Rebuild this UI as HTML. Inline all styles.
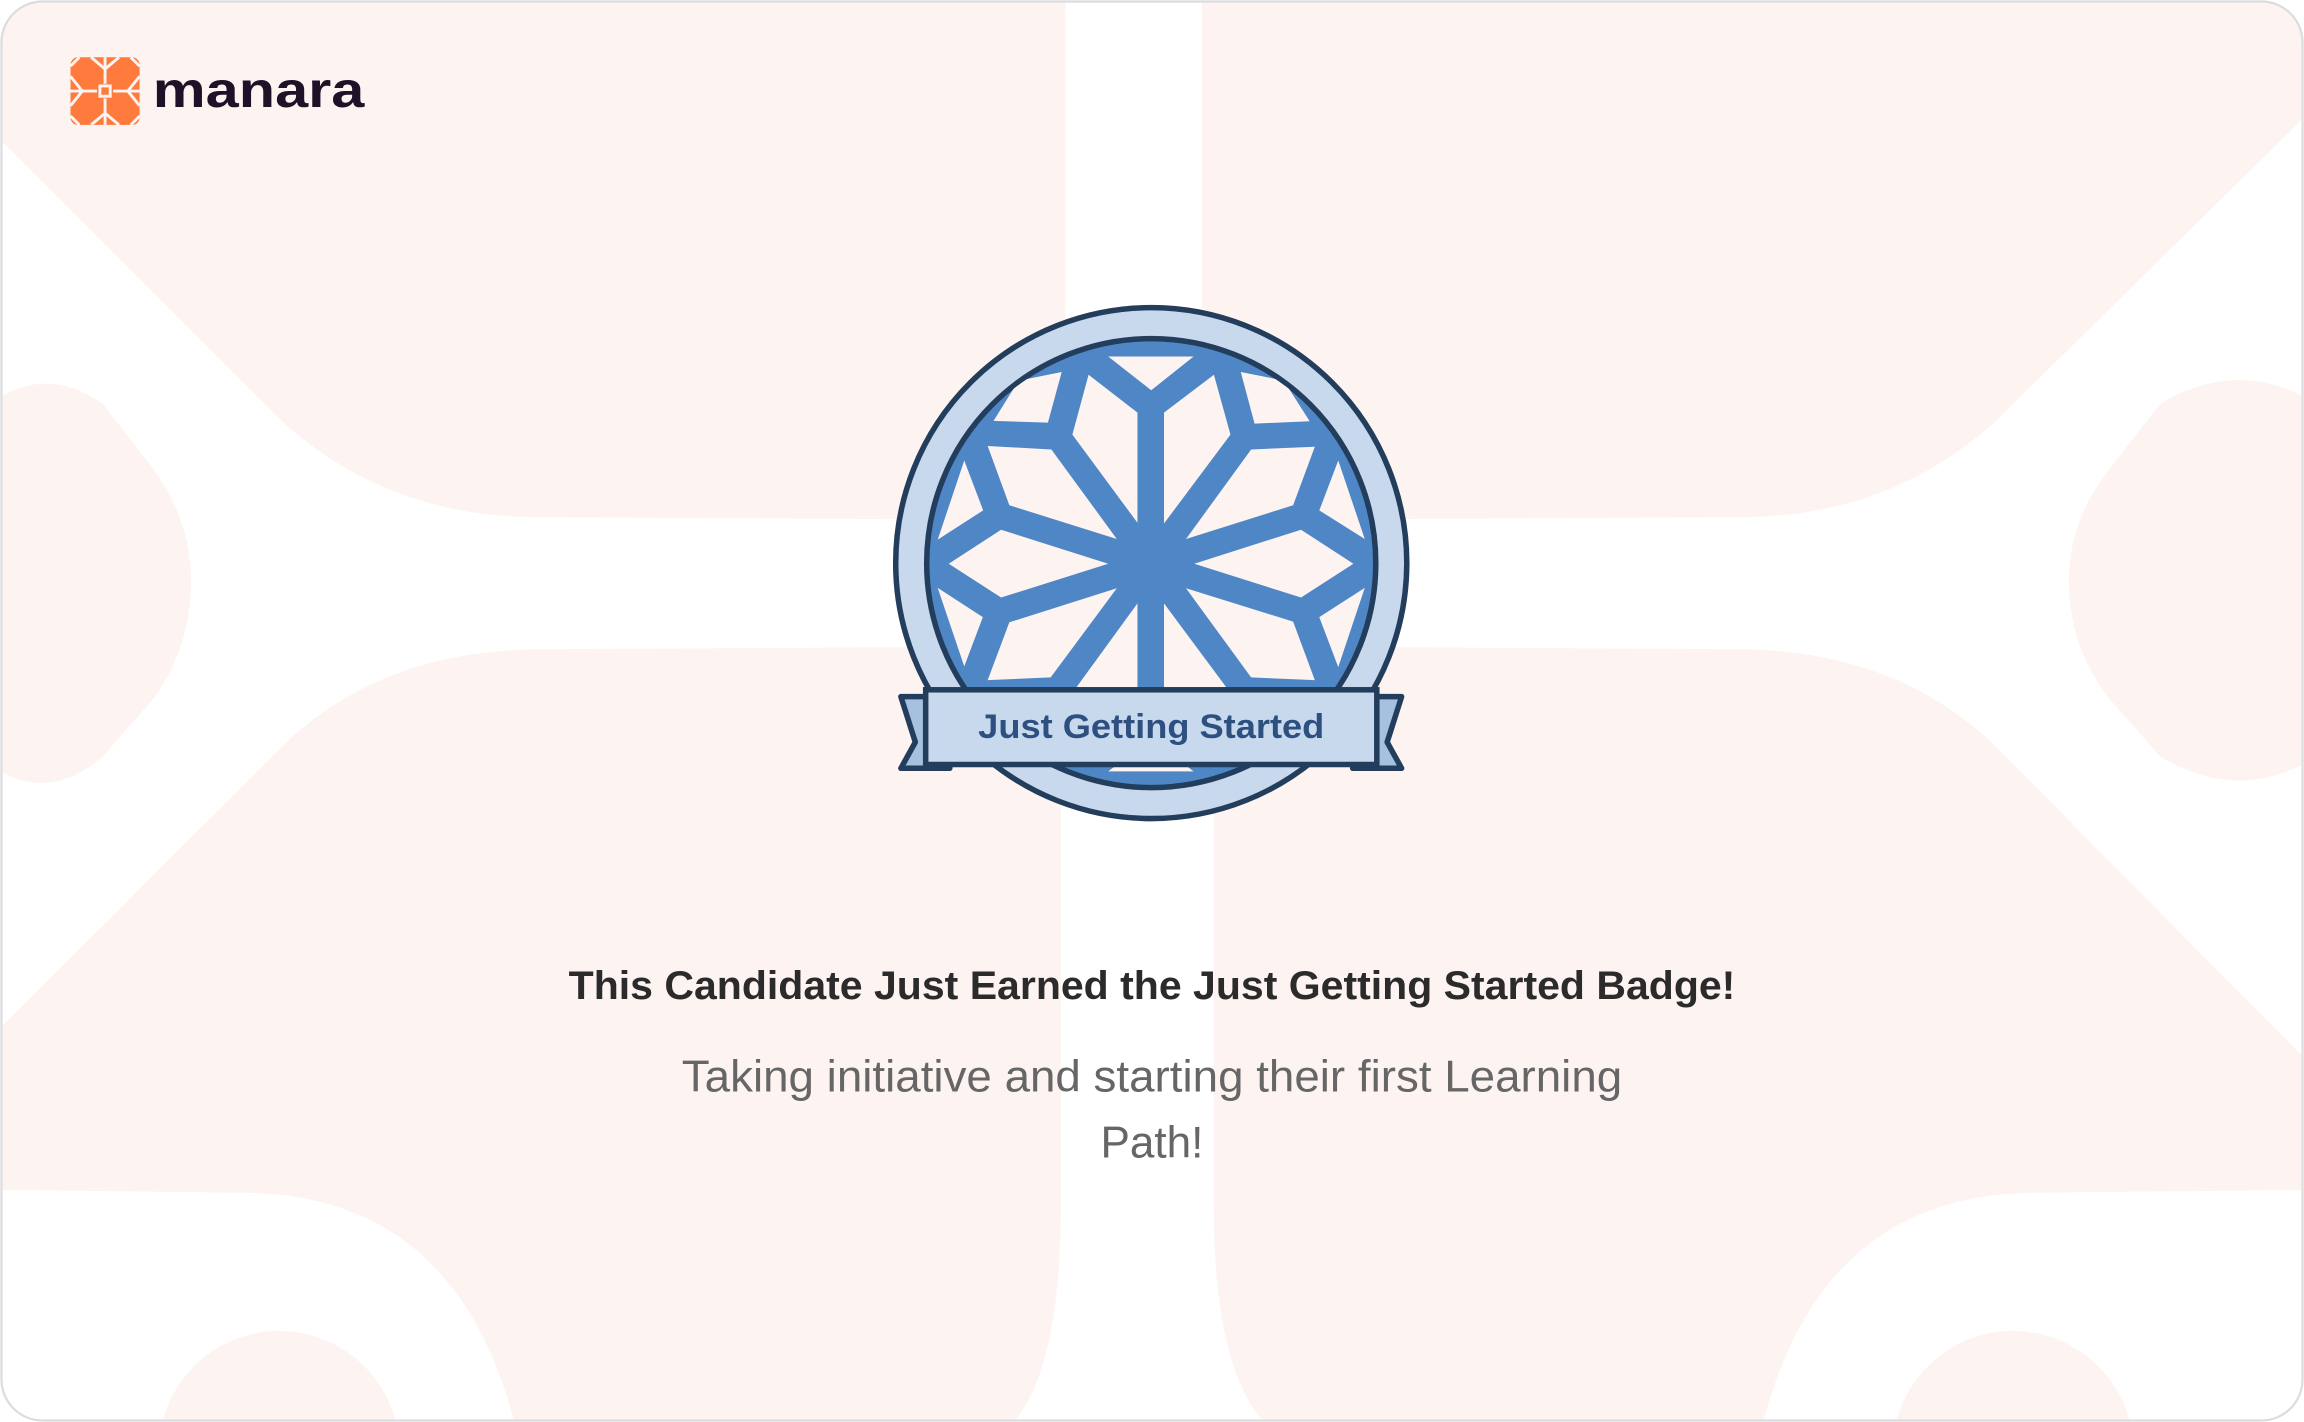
<!DOCTYPE html>
<html><head><meta charset="utf-8"><style>
html,body{margin:0;padding:0;background:#fff;width:2304px;height:1422px;overflow:hidden;}
svg{display:block;}
</style></head><body>
<svg width="2304" height="1422" viewBox="0 0 1568 968" preserveAspectRatio="none" xmlns="http://www.w3.org/2000/svg">
<defs><clipPath id="card"><rect x="1" y="1" width="1566" height="966" rx="28"/></clipPath></defs>
<rect x="0" y="0" width="1568" height="968" fill="#fff"/>
<g clip-path="url(#card)" fill="#fdf4f1">
<path d="M0,0 H725 V340 Q725,354 710,354 L360,352 Q260,350 190,285 L0,95 Z"/>
<path d="M818,0 H1568 V80 L1360,285 Q1290,350 1190,352 L830,354 Q818,354 818,340 Z"/>
<path d="M0,700 L190,510 Q255,445 360,442 L710,440 Q722,440 722,455 V820 Q722,930 690,968 H350 Q310,815 170,812 L0,810 Z"/>
<path d="M1568,720 L1360,510 Q1295,445 1190,442 L840,440 Q826,440 826,455 V820 Q826,930 860,968 H1200 Q1240,815 1380,812 L1568,810 Z"/>
<circle cx="190" cy="988" r="82"/>
<circle cx="1370" cy="988" r="82"/>
<path d="M0,270 Q35,250 70,275 L105,320 Q130,355 130,395 Q130,440 105,475 L70,515 Q35,545 0,525 Z"/>
<path d="M1568,270 Q1520,245 1470,275 L1435,320 Q1408,355 1408,395 Q1408,440 1435,475 L1470,515 Q1520,545 1568,520 Z"/>
</g>
<rect x="1" y="1" width="1566" height="966" rx="28" fill="none" stroke="#dcdcdf" stroke-width="1.5"/>

<!-- logo -->
<rect x="48" y="39" width="47" height="46" rx="5" fill="#ff7a3d"/>
<g stroke="#fdf4f1" stroke-width="2" fill="none">
<path d="M71.5,39 V57 M71.5,67 V85 M48,62 H66 M77,62 H95"/>
<path d="M62,39 L71.5,47 L81,39 M62,85 L71.5,77 L81,85 M48,52 L56,62 L48,72 M95,52 L87,62 L95,72"/>
<path d="M48,45 L54,39 M89,39 L95,45 M48,79 L54,85 M89,85 L95,79"/>
<rect x="68" y="58.5" width="7" height="7"/>
</g>
<text x="104" y="73" font-family="Liberation Sans, sans-serif" font-weight="bold" font-size="34" fill="#1e1128" textLength="144" lengthAdjust="spacingAndGlyphs">manara</text>

<!-- badge -->
<svg x="599.5" y="200.5" width="367.5" height="374.3" viewBox="0 0 1568 1597">
<defs><clipPath id="inner"><circle cx="785" cy="780" r="645"/></clipPath></defs>
<circle cx="785" cy="780" r="742" fill="#c8d9ee" stroke="#233d5c" stroke-width="16"/>
<circle cx="785" cy="780" r="652" fill="#4f87c6" stroke="#233d5c" stroke-width="16"/>
<g clip-path="url(#inner)" fill="#fdf4f1">
<polygon points="660,180 908,180 785,278"/>
<polygon points="525,225 485,372 327,367 400,250"/>
<polygon points="1045,225 1085,375 1245,368 1170,250"/>
<polygon points="242,482 297,627 165,712"/>
<polygon points="1328,482 1273,627 1405,710"/>
<polygon points="165,852 296,937 242,1080"/>
<polygon points="1405,852 1273,937 1328,1082"/>
<polygon points="603,233 745,343 745,663 556,407"/>
<polygon points="967,233 822,343 822,665 1015,407"/>
<polygon points="310,440 495,450 685,710 373,612"/>
<polygon points="1260,442 1075,450 886,710 1197,612"/>
<polygon points="197,782 349,683 660,782 349,880"/>
<polygon points="1372,782 1220,683 910,782 1220,880"/>
<polygon points="310,1120 373,952 685,853 493,1112"/>
<polygon points="1260,1120 1197,950 886,853 1075,1112"/>
<polygon points="556,1157 745,897 745,1343 603,1330"/>
<polygon points="1015,1157 822,897 822,1343 967,1330"/>
<polygon points="660,1385 908,1385 785,1290"/>
</g>
<path d="M58,1168 L200,1168 L200,1376 L58,1376 L100,1300 Z" fill="#a6c1e0" stroke="#233d5c" stroke-width="16" stroke-linejoin="round"/>
<path d="M1512,1168 L1370,1168 L1370,1376 L1512,1376 L1470,1300 Z" fill="#a6c1e0" stroke="#233d5c" stroke-width="16" stroke-linejoin="round"/>
<rect x="130" y="1148" width="1310" height="217" fill="#c8d9ee" stroke="#233d5c" stroke-width="16"/>
<text x="785" y="1288" text-anchor="middle" font-family="Liberation Sans, sans-serif" font-weight="bold" font-size="100" fill="#2d5080" textLength="1005" lengthAdjust="spacingAndGlyphs">Just Getting Started</text>
</svg>

<text x="784" y="680" text-anchor="middle" font-family="Liberation Sans, sans-serif" font-weight="bold" font-size="27" fill="#2b2b2b" textLength="794" lengthAdjust="spacingAndGlyphs">This Candidate Just Earned the Just Getting Started Badge!</text>
<text x="784" y="743" text-anchor="middle" font-family="Liberation Sans, sans-serif" font-size="30" fill="#666" textLength="640" lengthAdjust="spacingAndGlyphs">Taking initiative and starting their first Learning</text>
<text x="784" y="788" text-anchor="middle" font-family="Liberation Sans, sans-serif" font-size="30" fill="#666">Path!</text>
</svg>
</body></html>
